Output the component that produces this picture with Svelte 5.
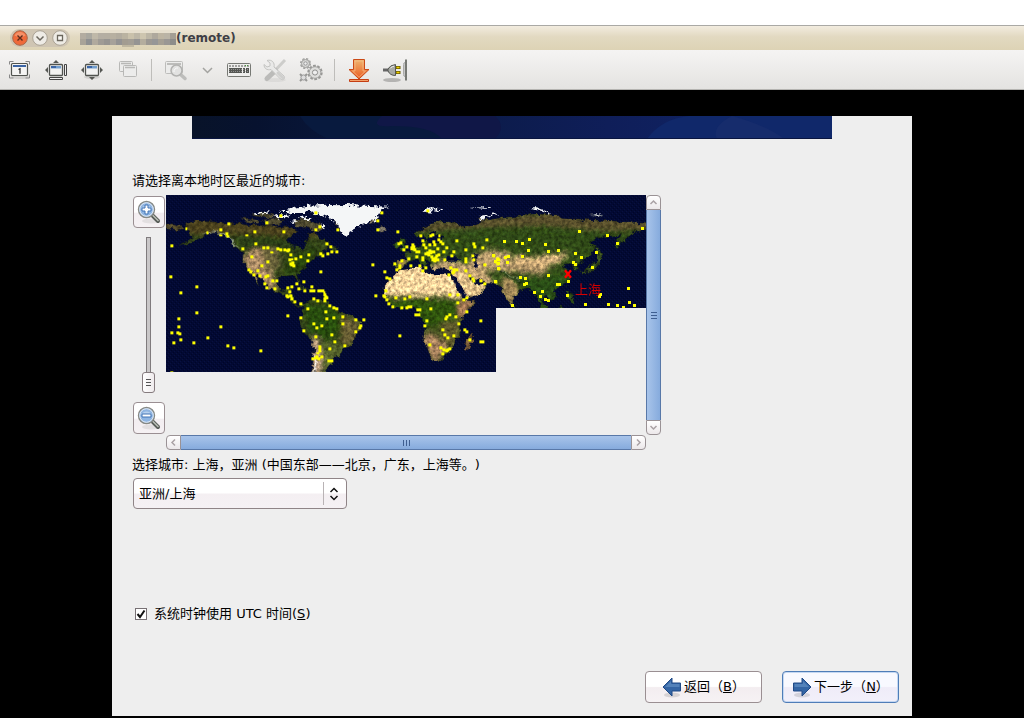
<script>
  let zoom = $state(0);
  let utc = $state(true);
  let zone = $state('亚洲/上海');

  // City markers, grouped by map sheet (Americas, Europe & Africa, Asia).
  const sheets = [
    { x: -18, y: -15, pts: '35,167 79,116 142,128 182,119 182,136 200,131 203,139 206,101 260,136 284,125 320,98 371,125 362,77 467,68 479,110 467,119 533,119 248,176 287,161 311,173 323,173 335,187 353,176 362,179 374,179 383,182 386,179 275,200 323,215 392,194 389,209 395,208 407,206 422,200 446,194 443,212 392,221 398,218 401,227 395,224 482,191 488,197 503,191 515,185 530,185 500,161 512,170 482,245 266,239 272,245 281,254 293,242 305,227 299,257 317,260 323,258 314,281 320,293 338,272 350,272 344,296 32,260 110,290 62,308 110,368 56,386 56,410 35,428 53,428 59,431 41,458 62,449 101,458 143,443 182,410 203,467 221,473 302,482 35,547 410,282 431,275 383,293 395,290 389,305 416,296 434,302 455,290 452,302 461,302 476,302 482,302 488,303 493,308 495,314 497,320 494,326 502,323 494,332 380,317 383,320 392,318 395,326 404,335 422,341 443,356 462,326 473,332 509,347 521,353 530,356 383,377 422,383 431,422 467,440 461,401 470,413 485,407 497,365 500,386 521,383 515,434 524,455 509,476 479,470 479,476 479,482 474,490 470,500 458,506 467,503 476,506 485,500 506,512 515,512' },
    { x: 492, y: -15, pts: '155,68 143,92 143,119 23,119 203,125 293,62 5,185 20,185 128,224 164,245 170,263 179,266 137,317 161,317 167,302 206,161 212,158 221,179 230,170 236,206 215,212 194,221 200,239 209,233 209,227 242,227 245,176 248,164 251,170 245,173 254,179 260,185 266,185 269,227 278,242 287,233 278,152 272,137 302,137 308,134 328,137 326,149 332,155 338,161 281,164 287,173 299,164 311,155 314,164 323,176 299,182 302,188 293,188 287,191 296,194 278,203 278,209 260,200 305,185 311,185 305,200 311,206 317,203 308,209 314,212 323,209 320,197 326,194 341,185 350,173 344,209 365,197 371,185 380,152 407,179 407,206 407,212 407,215 431,161 434,170 428,197 431,209 458,173 470,149 362,233 371,239 371,245 356,254 380,239 368,248 407,242 419,257 428,266 431,272 452,272 464,281 497,275 464,224 491,197 497,215 503,221 506,209 503,206 506,236 359,314 383,314 401,329 410,323 410,365 383,338 377,380 359,374 350,380 347,386 386,401 404,419 410,425 419,449 452,392 452,455 458,455 371,437 353,443 344,434 338,419 290,392 284,407 257,374 266,374 266,359 302,356 290,326 224,326 239,320 197,323 215,353 230,353 236,350 242,350 188,350 176,341 170,329 164,320 263,359 269,359 299,464 332,473 341,479 353,479 359,476 350,482 338,491 209,437 77,389 101,389 92,407 89,413 77,425 38,401 38,380 11,383 5,434 14,455 44,467 5,512' },
    { x: 972, y: -15, pts: '269,125 353,136 458,116 383,161 44,155 80,155 98,161 119,149 167,164 116,182 176,185 206,182 257,191 275,203 320,188 308,233 251,218 257,224 98,200 47,203 56,200 11,197 17,215 23,209 26,221 53,218 26,236 17,275 92,263 107,266 104,284 110,281 133,308 158,305 152,320 167,329 176,332 176,257 203,284 209,284 236,275 233,317 68,347 287,344 356,344 383,347 401,352 419,338 434,347 416,296 332,314 329,320' }
  ].map((s) => ({ ...s, pts: s.pts.split(' ').map((p) => p.split(',').map(Number)) }));

  // Pixelated host name in the title: one hex shade per block, two rows.
  const mosaic = [
    ['#b3aca0', '#a9a79f', '#bfb8a8', '#b4aea3', '#b4aea2', '#b7b0a1', '#b2ac9f', '#bab3a1', '#c9c1ab', '#bdb7a7', '#cdc5af', '#bcb6a6', '#aea89d', '#bdb5a3', '#bab4a6', '#a39e94'],
    ['#a9a398', '#8f9091', '#b0a99d', '#9f9b95', '#969491', '#a6a19a', '#949393', '#a29c91', '#a39e95', '#959493', '#b4ad9e', '#9c9893', '#969697', '#a59f94', '#9a9794', '#8d8c8a']
  ];
</script>

{#snippet glass(minus)}
  <svg width="26" height="26" viewBox="0 0 26 26" aria-hidden="true">
    <ellipse cx="15" cy="22" rx="9" ry="2.5" fill="#000" opacity=".07" />
    <path d="M16.5 16.5 22 22" stroke="#555a55" stroke-width="4" stroke-linecap="round" />
    <path d="M17 16.5 22 21.5" stroke="#b9bdb6" stroke-width="1.6" stroke-linecap="round" />
    <circle cx="10.5" cy="10.5" r="8" fill="#8fb5e2" stroke="#888a85" stroke-width="1.4" />
    <circle cx="10.5" cy="10.5" r="6.8" fill="none" stroke="#e4ecf5" stroke-width="1" />
    <path d="M5 10a6 6 0 0 1 11 0z" fill="#c8dcf2" opacity=".7" />
    {#if minus}
      <path d="M6 9h9v3H6z" fill="#fff" stroke="#3f73b5" />
    {:else}
      <path d="M9 6h3v3h3v3h-3v3H9v-3H6V9h3z" fill="#fff" stroke="#3f73b5" />
    {/if}
  </svg>
{/snippet}

{#snippet arrow(flip)}
  <svg class="arrow" width="20" height="22" viewBox="0 0 20 22" aria-hidden="true">
    <ellipse cx="10" cy="19" rx="8" ry="2.4" fill="#000" opacity=".12" />
    <g transform={flip ? 'matrix(-1 0 0 1 20 0)' : undefined}>
      <path d="M1 11 10 2v5h8.500v8H10v5z" fill="#3465a4" stroke="#204a87" stroke-linejoin="round" />
      <path d="M3 11 9 5v3h8.500v3z" fill="#729fcf" opacity=".5" />
    </g>
  </svg>
{/snippet}

<div class="screen">
  <header class="titlebar">
    <div class="controls">
      <button aria-label="Close"><svg width="18" height="18" viewBox="0 0 18 18">
        <circle cx="9" cy="9" r="7.300" fill="#ef6a3a" stroke="#a7694c" />
        <path d="M3.500 6.500a6 6 0 0 1 11 0q-5 3-11 0" fill="#f8a17a" opacity=".7" />
        <path d="m6.500 6.500 5 5m0-5-5 5" stroke="#5c2c1c" stroke-width="1.400" />
      </svg></button>
      <button aria-label="Minimize"><svg width="18" height="18" viewBox="0 0 18 18">
        <circle cx="9" cy="9" r="7.300" fill="#eeebe5" stroke="#aaa294" />
        <path d="m5.500 7.500 3.500 3.500 3.500-3.500" fill="none" stroke="#6b675e" stroke-width="1.500" />
      </svg></button>
      <button aria-label="Maximize"><svg width="18" height="18" viewBox="0 0 18 18">
        <circle cx="9" cy="9" r="7.300" fill="#eeebe5" stroke="#aaa294" />
        <path d="M6.500 6.500h5v5h-5z" fill="#faf8f4" stroke="#6b675e" stroke-width="1.300" />
      </svg></button>
    </div>
    <svg class="mosaic" width="96" height="18" viewBox="0 0 96 18" aria-hidden="true">
      {#each mosaic as row, r}
        {#each row as c, i}
          <rect x={i * 6} y={4 + r * 6} width="6" height="6" fill={c} />
        {/each}
      {/each}
      <path d="M0 1h96v3H0z" fill="#e6dfce" />
      <path d="M42 16h12v2H42z" fill="#aaa391" opacity=".6" />
    </svg>
    <h1>(remote)</h1>
  </header>

  <nav class="toolbar" aria-label="Viewer">
    <button class="tool" aria-label="Actual size"><svg width="28" height="28" viewBox="0 0 28 28">
      <ellipse cx="14" cy="21" rx="9" ry="2" fill="#000" opacity=".1" />
      <path d="M3.500 8.500v-3h4m12 0h4v3m0 10v3.500h-4m-12 0h-4v-3.500" fill="none" stroke="#888" />
      <rect x="5.500" y="7.500" width="16" height="12" rx="1" fill="#f4f4f3" stroke="#50534f" stroke-width="1.200" />
      <path d="M7 9h13v2H7z" fill="#3c65a5" />
      <path d="m12.500 13.500 1.500-.8v5" fill="none" stroke="#222" stroke-width="1.200" />
    </svg></button>
    <button class="tool" aria-label="Resize guest"><svg width="28" height="28" viewBox="0 0 28 28">
      <path d="m14 4 3 3h-6zM3 14l3-3v6z" fill="#555753" />
      <rect x="7.500" y="8.500" width="13" height="11" rx="1" fill="#f2f2f1" stroke="#50534f" stroke-width="1.300" />
      <path d="M9 10h10v2.500H9z" fill="#729fcf" /><path d="M9 10h5v2H9z" fill="#3c65a5" />
      <path d="M22.500 8.500h2v11h-2zM7.500 21.500h13v2h-13z" fill="#eee" stroke="#444" />
    </svg></button>
    <button class="tool" aria-label="Fit window"><svg width="28" height="28" viewBox="0 0 28 28">
      <ellipse cx="14" cy="21" rx="8" ry="2" fill="#000" opacity=".1" />
      <path d="m14 4 3 3h-6zM3 14l3-3v6zm22 0-3-3v6zM14 24l3-3h-6z" fill="#555753" />
      <rect x="7.500" y="8.500" width="13" height="11" rx="1" fill="#f2f2f1" stroke="#50534f" stroke-width="1.300" />
      <path d="M9 10h10v2.500H9z" fill="#729fcf" /><path d="M9 10h5v2H9z" fill="#3c65a5" />
    </svg></button>
    <button class="tool" aria-label="Windows" disabled><svg width="28" height="28" viewBox="0 0 28 28">
      <g fill="#ececeb" stroke="#b8b8b6"><rect x="5.500" y="5.500" width="13" height="10" rx="1" /><path d="M7 7.500h10" stroke-width="1.500" />
      <rect x="9.500" y="9.500" width="13" height="11" rx="1" /><path d="M11 11.500h10" stroke-width="1.500" /></g>
    </svg></button>
    <span class="sep"></span>
    <button class="tool" aria-label="Zoom" disabled><svg width="28" height="28" viewBox="0 0 28 28">
      <g fill="#ececeb" stroke="#bdbdbb"><rect x="3.500" y="5.500" width="17" height="12" rx="1" /><path d="M5 8h14" stroke-width="2" />
      <path d="m18 18 5 4.500" stroke-width="3.500" stroke-linecap="round" />
      <circle cx="14.500" cy="14.500" r="5.500" fill="#e2e2e1" stroke="#b2b2b0" stroke-width="1.500" /></g>
      <path d="M12 16a3.500 3.500 0 0 1 4-4" fill="none" stroke="#fafafa" />
    </svg></button>
    <button class="tool slim" aria-label="Zoom menu"><svg width="14" height="14" viewBox="0 0 14 14">
      <path d="M2 5l4.500 4.500L11 5" fill="none" stroke="#a3a3a0" stroke-width="1.500" />
    </svg></button>
    <button class="tool" aria-label="Keyboard"><svg width="28" height="28" viewBox="0 0 28 28">
      <rect x="2.500" y="7.500" width="23" height="13" rx="1" fill="#eeeeec" stroke="#777974" />
      <path d="M4 10h20" stroke="#555" stroke-dasharray="2 1" />
      <path d="M4 12h13v5H4zm14 0h2v5h-2zm3 0h3v5h-3z" fill="#555753" />
      <path d="M4 13.500h20M4 15.500h20" stroke="#aaa" stroke-dasharray="1 1" stroke-width=".7" />
      <path d="M20 9.500h4" stroke="#4a9a3a" stroke-dasharray="1 1" />
    </svg></button>
    <button class="tool" aria-label="Preferences" disabled><svg width="28" height="28" viewBox="0 0 28 28">
      <ellipse cx="14" cy="24" rx="11" ry="2" fill="#000" opacity=".05" />
      <path d="M24 4 15 13.500" stroke="#cdcdcb" stroke-width="3" /><path d="m14.500 14.500-8.500 8" stroke="#bbbbb9" stroke-width="5" stroke-linecap="round" />
      <path d="M6 4.500 9 7v3l-3 1-3-2.500c0 4 3 6 7 5l9.500 9.500c3 2 5-1 3.500-3L13 11c1-4-2-8-7-6.500z" fill="#e9e9e8" stroke="#c4c4c2" />
      <path d="m17 17 5 5" stroke="#cfcfcd" stroke-width="3" stroke-linecap="round" />
    </svg></button>
    <button class="tool" aria-label="Send keys"><svg width="28" height="28" viewBox="0 0 28 28">
      <g fill="none">
        <circle cx="8.500" cy="7.500" r="4.600" stroke="#a2a2a0" stroke-width="2" stroke-dasharray="2.100 1.510" />
        <circle cx="8.500" cy="7.500" r="4" fill="#d7d7d5" stroke="#a2a2a0" /><circle cx="8.500" cy="7.500" r="1.700" fill="#eee" stroke="#999" />
        <circle cx="18" cy="16.500" r="6.600" stroke="#979795" stroke-width="2.200" stroke-dasharray="2.700 1.447" />
        <circle cx="18" cy="16.500" r="5.800" fill="#dededc" stroke="#a2a2a0" /><circle cx="18" cy="16.500" r="2.600" fill="#eee" stroke="#8e8e8c" />
        <path d="m3 18 7 7m0-7-7 7" stroke="#979795" stroke-width="2" />
        <circle cx="6.500" cy="21.500" r="2.600" fill="#ddd" stroke="#999" />
      </g>
    </svg></button>
    <span class="sep"></span>
    <button class="tool" aria-label="Install"><svg width="28" height="28" viewBox="0 0 28 28">
      <defs><linearGradient id="down" x2="0" y2="1"><stop offset="0" stop-color="#efb56e" /><stop offset="1" stop-color="#ea5a22" /></linearGradient></defs>
      <path d="M8.500 3.500h11v10H24L14 23 4 13.500h4.500z" fill="url(#down)" stroke="#cb4a16" />
      <path d="M10 5h8v10h2.500L14 21.300 7.500 15H10z" fill="none" stroke="#f8c594" opacity=".6" />
      <path d="M4.500 23.500h19v2h-19z" fill="#f3a06a" stroke="#c43d12" />
    </svg></button>
    <button class="tool" aria-label="Disconnect"><svg width="28" height="28" viewBox="0 0 28 28">
      <ellipse cx="11" cy="24" rx="9" ry="2" fill="#000" opacity=".22" />
      <path d="M2 14h6" stroke="#666" stroke-width="3" />
      <path d="M7 13q2-4 7.500-4.500v11Q9 19.500 7 15z" fill="#a7a9a4" stroke="#555753" />
      <path d="M9.500 12q1.500-1.500 3.500-1.800" fill="none" stroke="#eee" />
      <path d="M15 11.500h4.500m-4.500 5h4.500" stroke="#665a00" stroke-width="3" /><path d="M15.500 11.500h3m-3 5h3" stroke="#f0d000" stroke-width="1.500" />
      <path d="M24 6.500q-1.500 0-1.500 2v10q0 2 1.500 2z" fill="#e4e4e2" stroke="#aaa" /><path d="M25 3.500v21" stroke="#777974" stroke-width="2" />
    </svg></button>
  </nav>

  <main>
    <form class="installer">
      <svg class="banner" viewBox="0 0 640 23" preserveAspectRatio="none" aria-hidden="true">
        <defs>
          <linearGradient id="night"><stop offset="0" stop-color="#081329" /><stop offset=".1" stop-color="#07122f" /><stop offset=".35" stop-color="#0a1a43" /><stop offset=".65" stop-color="#0f1e59" /><stop offset="1" stop-color="#10276c" /></linearGradient>
        </defs>
        <path d="M0 0h640v23H0z" fill="url(#night)" />
        <path d="M108 0q8 14 28 23H302q12-14 0-23z" fill="#081a3e" />
        <path d="M190 0q-14 12 10 10 40 0 50 13h53q12-12 0-23z" fill="#101747" />
        <path d="M455 23q14-20 42-23h143v23z" fill="#10286a" />
        <path d="M525 23q-6-12 15-23 36 10 52 23z" fill="#1a2f6e" opacity=".6" />
        <path d="M0 22.500h640" stroke="#091540" />
      </svg>

      <p class="prompt" id="map-label">请选择离本地时区最近的城市:</p>

      <div class="mapgrid">
        <div class="zoomer">
          <button type="button" class="square" aria-label="放大" onclick={() => (zoom = Math.min(10, zoom + 1))}>{@render glass(false)}</button>
          <input type="range" min="0" max="10" bind:value={zoom} aria-label="缩放" />
          <button type="button" class="square" aria-label="缩小" onclick={() => (zoom = Math.max(0, zoom - 1))}>{@render glass(true)}</button>
        </div>

        <svg class="map" viewBox="0 0 1440 720" role="img" aria-labelledby="map-label">
          <defs>
            <clipPath id="loaded"><path d="M0 0h1440v339H990v192H0z" /></clipPath>
            <pattern id="sea" width="12" height="12" patternUnits="userSpaceOnUse">
              <path d="M0 0h12v12H0z" fill="#020933" /><path d="M0 0h3v3H0zM6 6h3v3H6z" fill="#08103f" /><path d="M9 3h3v3H9zM3 9h3v3H3z" fill="#000527" />
            </pattern>
            <filter id="terrain" x="0" y="0" width="1440" height="720" filterUnits="userSpaceOnUse" color-interpolation-filters="sRGB">
              <feTurbulence type="fractalNoise" baseFrequency=".07" numOctaves="3" seed="4" result="coast" />
              <feDisplacementMap in="SourceGraphic" in2="coast" scale="18" xChannelSelector="R" yChannelSelector="G" result="land" />
              <feTurbulence type="fractalNoise" baseFrequency=".09" numOctaves="4" seed="9" />
              <feColorMatrix values="1.200 0 0 0 -.1  1.200 0 0 0 -.1  1.200 0 0 0 -.1  0 0 0 0 1" result="relief" />
              <feComposite in="land" in2="relief" operator="arithmetic" k1=".9" k2=".58" k3="0" k4="0" result="lit" />
              <feComposite in="lit" in2="land" operator="in" />
            </filter>
            <filter id="frost" x="0" y="0" width="1440" height="720" filterUnits="userSpaceOnUse" color-interpolation-filters="sRGB">
              <feTurbulence type="fractalNoise" baseFrequency=".09" numOctaves="3" seed="4" />
              <feDisplacementMap in="SourceGraphic" scale="20" xChannelSelector="R" yChannelSelector="G" />
            </filter>
            <filter id="soft" x="-20%" y="-20%" width="140%" height="140%"><feGaussianBlur stdDeviation="6" /></filter>
            <clipPath id="america"><path d="M72 102 80 93 110 91 150 92 205 97 240 98 262 104 300 100 330 104 350 110 372 104 395 112 410 122 392 132 378 148 390 158 412 163 422 178 432 174 430 156 442 142 436 128 460 122 475 140 492 146 508 160 500 172 482 180 495 186 485 194 462 200 450 212 440 218 432 230 418 240 409 250 416 264 418 277 410 272 404 256 390 254 370 256 352 260 346 276 352 290 368 298 378 290 394 290 388 304 398 318 399 332 412 342 424 340 440 328 460 322 480 328 500 334 522 350 540 362 568 372 602 392 600 408 582 430 578 460 555 468 538 490 520 505 505 524 492 546 452 546 456 510 459 480 455 450 432 430 418 400 416 385 424 370 426 350 408 347 392 334 382 320 362 308 342 302 322 292 312 280 298 258 284 250 300 284 290 278 272 246 252 225 244 208 246 190 240 178 218 166 204 146 186 134 160 126 135 132 110 146 80 160 45 168 78 152 100 138 85 128 76 114z" /></clipPath>
            <clipPath id="africa"><path d="M205 238 230 234 270 228 276 242 300 250 340 248 360 256 366 270 385 302 402 328 432 330 428 345 400 372 384 395 386 410 388 430 370 450 365 470 350 490 330 508 305 512 298 500 288 470 276 440 284 400 268 378 265 358 240 346 210 354 185 348 168 328 158 310 162 282 180 262 195 245z" /></clipPath>
            <clipPath id="eurasia"><path d="M192 206 226 206 216 184 236 182 250 172 268 165 278 148 290 150 292 160 330 152 336 134 312 134 314 116 300 120 298 140 284 146 276 132 254 138 250 128 272 114 300 98 340 92 375 94 402 108 435 100 460 88 510 80 570 75 610 68 680 72 692 82 740 84 820 88 880 92 960 98 960 112 932 120 900 128 880 148 862 170 852 168 858 148 874 132 830 136 790 144 774 156 796 168 780 190 756 208 740 217 744 238 732 238 724 222 704 219 696 228 714 246 718 266 704 280 680 290 665 298 676 316 665 330 650 322 640 312 632 325 646 345 655 358 625 356 630 340 610 305 590 290 572 297 550 320 543 348 532 334 518 305 506 286 484 274 460 274 430 262 414 252 410 260 434 278 460 280 466 290 442 312 404 324 388 298 370 266 366 250 350 237 320 232 306 238 296 214 278 198 292 220 280 230 262 206 250 208 230 215 218 228 205 236 190 226z" /></clipPath>
          </defs>
          <g clip-path="url(#loaded)">
            <path d="M0 0h1440v720H0z" fill="url(#sea)" />
            <g filter="url(#terrain)">
              <g transform="translate(-15 -12)">
                <path d="M10 98 50 102 74 111 50 117 10 110z" fill="#4a4226" />
                <g fill="#4f4a2f">
                  <path d="M238 80 268 82 300 90 288 98 250 92zM262 72 320 64 350 76 318 82zM300 88 345 80 372 90 350 102 316 102zM400 84 440 82 480 100 492 116 470 122 440 108 420 112 400 100z" />
                  <path d="M392 116 412 120 400 130zM414 274 432 288 426 290zM404 282 440 290 446 298 412 292zM452 296 474 298 468 304zM512 164 530 170 520 182 504 178z" fill="#33451c" />
                </g>
                <g clip-path="url(#america)">
                  <path d="M0 0h640v560H0z" fill="#34441a" />
                  <g filter="url(#soft)">
                    <path d="M70 85H500v50l-100 10-60-10-100-5-170 0z" fill="#49411f" />
                    <path d="m210 130 200 10 70 30-60 10-160 0z" fill="#2c3c12" />
                    <path d="m246 195 30-20 35 0 20 35 4 40 14 45-30 0-66-60z" fill="#a68762" />
                    <path d="m300 165 50 5 10 60-50 10z" fill="#665f38" />
                    <path d="m395 190 80-20-60 80-50 0z" fill="#26400f" />
                    <path d="m430 340 90 10 40 50-60 50-60-30z" fill="#274a0d" />
                    <path d="m540 370 60 25-20 60-40 10z" fill="#665c32" />
                    <path d="m450 440 22 0 10 40 0 70-35 0z" fill="#b29578" />
                    <path d="m490 450 60 20-50 70-20 0z" fill="#55622a" />
                  </g>
                  <path d="m120 130 30-8 40 6 20 18 24 22-20-6-24-26-30-6z" fill="#c9d1c9" opacity=".5" />
                  <path d="M456 490 466 510 458 546" stroke="#eee" stroke-width="4" fill="none" />
                </g>
                <path d="M395 160 405 158 402 176z" fill="#020933" opacity=".8" />
              </g>
              <g transform="translate(495 -12)">
                <path d="M8 86 28 104 30 122 20 108zM145 82 130 96 108 100 120 88z" fill="#746c5b" />
                <path d="M134 112 152 108 172 113 166 119 142 121z" fill="#756f60" />
                <path d="M440 84 446 78 460 88 450 92z" fill="#6a6045" />
                <path d="M189 164 198 152 206 158 204 168 192 172zM206 142 218 142 222 158 232 172 220 180 204 180 212 168z" fill="#304f19" />
                <g clip-path="url(#eurasia)">
                  <path d="M180 50h800v320H180z" fill="#314a18" />
                  <g filter="url(#soft)">
                    <path d="m240 90 160 0 80-10 260-20 260 30 0 30-210-2-150-15-150 5-250 15z" fill="#564d2c" />
                    <path d="m250 130 160 0 180-5 160 0 120 5-100 60-120-35-200 10-60-10-120 10z" fill="#2e4716" />
                    <path d="m330 205 80 15 20-30 50-14 60 10 0 30 80 10-30 20-130-10 40 50-120 0-20 40-100 0 0-70z" fill="#b79a6c" />
                    <path d="m360 240 60 10 50 30-30 50-50-10z" fill="#dfbd87" />
                    <path d="m555 190 40 10 50-8 70-6-30 30-50 14-70-8-30 10z" fill="#d2ae7a" />
                    <path d="m545 210 90 14 20 10-20 16-80-8-30-18z" fill="#ab8f63" />
                    <path d="m515 255 30 5 20 40-25 50-30-50z" fill="#9b8252" />
                    <path d="m570 262 150-12-10 120-90-10z" fill="#2c4d17" />
                    <path d="m190 200 40 0-20 40z" fill="#a6834f" />
                  </g>
                </g>
                <path d="m508 240 18 14 42 18 30 3" fill="none" stroke="#263e17" stroke-width="8" opacity=".8" />
                <path d="m510 236 24 18 34 14" fill="none" stroke="#e8e8e8" stroke-width="2" opacity=".5" />
                <path d="M338 208 350 196 370 194 390 206 372 212 350 212zM424 190 440 188 434 204 442 224 438 236 428 228 430 212z" fill="#020933" />
                <g clip-path="url(#africa)">
                  <path d="M150 220h300v310H150z" fill="#3f4d1d" />
                  <g filter="url(#soft)">
                    <path d="M140 220h250v70l10 34-60-10-90 0-90 0z" fill="#f2cf98" />
                    <path d="m160 330 100-6 120 6 10 60-120 20z" fill="#2f5110" />
                    <path d="m385 330 50-5-40 60-15-10z" fill="#a57855" />
                    <path d="m270 430 40 0 40 40-40 50z" fill="#a7815d" />
                    <path d="m330 390 60 0-20 90-40-30z" fill="#5d582c" />
                  </g>
                </g>
                <path d="m366 258 8-2 34 60-4 10-18-26z" fill="#020933" />
                <path d="M402 474 404 444 424 424 429 440 416 478z" fill="#6b5133" />
                <path d="M744 240 770 234 782 218 800 206 802 188 812 206 802 224 786 240 756 248zM796 164 804 168 808 190 798 186zM802 180 818 188 806 196z" fill="#354a1c" />
                <path d="M712 300 722 308 724 322 734 340 718 330 708 312zM665 356 690 344 700 356zM552 344 560 356 550 356z" fill="#2f4e1a" />
                <path d="M770 70 820 72 806 80z" fill="#98a0a0" />
              </g>
            </g>
            <g filter="url(#frost)" fill="#f4f6f7">
              <g transform="translate(-14 -12)">
                <path d="M270 68 300 64 325 61 322 65 290 72zM335 74 362 70 384 76 372 82 350 80zM352 62 400 50 440 44 500 41 530 44 470 52 450 58 430 66 400 66 385 72 380 64zM410 80 430 76 452 86 440 88zM470 98 492 104 488 112zM392 90 410 86 400 96z" />
              </g>
              <g transform="translate(496 -12)">
                <path d="M-72 58-40 48 0 43 50 42 100 44 178 47 150 54 148 66 138 80 128 88 108 94 85 104 62 118 52 135 36 130 24 112 12 92-10 78-46 70z" />
                <path d="M273 58 300 52 336 55 318 60 304 58 294 68zM410 50 486 48 470 53zM440 84 452 74 480 68 506 66 490 71 462 78 450 88zM594 52 620 52 650 62 660 68 620 60zM786 70 812 71 800 75z" />
              </g>
            </g>
            {#each sheets as sheet}
              <g transform="translate({sheet.x} {sheet.y})" fill="#ff0" shape-rendering="crispEdges">
                {#each sheet.pts as [x, y]}<rect x={x - 4} y={y - 4} width="8" height="8" />{/each}
              </g>
            {/each}
            <path d="m1197 226 18 22m0-22-18 22" stroke="#f00" stroke-width="7" />
            <text x="1227" y="297">上海</text>
          </g>
        </svg>

        <div class="bar vertical">
          <button type="button" aria-label="向上滚动"><svg width="9" height="9" viewBox="0 0 9 9"><path d="m1.500 6 3-3 3 3" /></svg></button>
          <div class="grip"><i></i></div>
          <button type="button" aria-label="向下滚动"><svg width="9" height="9" viewBox="0 0 9 9"><path d="m1.500 3 3 3 3-3" /></svg></button>
        </div>
        <div class="bar horizontal">
          <button type="button" aria-label="向左滚动"><svg width="9" height="9" viewBox="0 0 9 9"><path d="m6 1.500-3 3 3 3" /></svg></button>
          <div class="grip"><i></i></div>
          <button type="button" aria-label="向右滚动"><svg width="9" height="9" viewBox="0 0 9 9"><path d="m3 1.500 3 3-3 3" /></svg></button>
        </div>
      </div>

      <label class="chosen" for="zone">选择城市: 上海，亚洲 (中国东部——北京，广东，上海等。)</label>
      <div class="combo">
        <select id="zone" bind:value={zone}>
          <option>亚洲/上海</option>
        </select>
        <svg width="10" height="14" viewBox="0 0 10 14" aria-hidden="true"><path d="m1.500 5 3.500-3.500L8.500 5M1.500 9 5 12.500 8.500 9" /></svg>
      </div>

      <label class="utc">
        <input type="checkbox" bind:checked={utc} />
        <span>系统时钟使用 UTC 时间(<u>S</u>)</span>
      </label>

      <footer>
        <button type="button" class="step">{@render arrow(false)}<span>返回（<u>B</u>）</span></button>
        <button type="button" class="step next">{@render arrow(true)}<span>下一步（<u>N</u>）</span></button>
      </footer>
    </form>
  </main>
</div>

<style>
  :global(body) { margin: 0; background: #fff; }
  .screen {
    box-sizing: border-box;
    min-height: 100vh;
    padding-top: 25px;
    display: flex;
    flex-direction: column;
    font: 13px/18px "DejaVu Sans", "Noto Sans CJK SC", sans-serif;
    text-spacing-trim: space-all;
    color: #000;
  }
  button { font: inherit; color: inherit; margin: 0; padding: 0; }

  .titlebar {
    display: flex;
    align-items: center;
    height: 24px;
    padding-left: 10px;
    border-top: 1px solid #aaa9a5;
    background: linear-gradient(#f2ecdf, #e2d9c1 45%, #ddd3b5);
  }
  .controls {
    display: flex;
    gap: 2px;
    padding: 0 1px;
    border-radius: 10px;
    background: #cfc5b3;
  }
  .controls button { width: 18px; height: 18px; border: 0; background: none; }
  .controls svg { display: block; }
  .mosaic { margin-left: 10px; }
  h1 { margin: 0; font-size: 12px; line-height: 18px; font-weight: bold; color: #3f3f46; }

  .toolbar {
    display: flex;
    align-items: center;
    height: 39px;
    padding-left: 2px;
    border-bottom: 1px solid #b5b4b1;
    background: linear-gradient(#f5f4f3, #e4e3e1);
  }
  .tool { display: grid; place-items: center; width: 36px; height: 36px; border: 0; background: none; }
  .slim { width: 27px; }
  .sep { width: 1px; height: 22px; margin: 0 6px 0 5px; background: #bebdba; }

  main { flex: 1; padding: 26px 16px 2px; background: #000; display: flex; justify-content: center; }
  .installer {
    box-sizing: border-box;
    width: 100%;
    max-width: 800px;
    padding: 0 13px 13px 20px;
    display: flex;
    flex-direction: column;
    align-items: flex-start;
    background: #eee;
  }
  .banner { display: block; box-sizing: border-box; width: 100%; height: 23px; padding: 0 67px 0 60px; }
  .prompt { margin: 33px 0 5px; }

  .mapgrid { display: grid; grid-template-columns: 34px minmax(0, 480px) 15px; grid-template-rows: auto 15px; }
  .zoomer { display: flex; flex-direction: column; align-items: flex-start; padding: 1px; }
  .square {
    display: grid;
    place-items: center;
    box-sizing: border-box;
    width: 32px;
    height: 32px;
    border: 1px solid #9a8f92;
    border-radius: 4px;
    background: linear-gradient(#fff 50%, #f3eef1 55%, #f5f1f3);
  }
  input[type="range"] {
    appearance: none;
    writing-mode: vertical-lr;
    direction: rtl;
    flex: 1;
    width: 13px;
    height: 156px;
    min-height: 0;
    margin: 9px;
    background: linear-gradient(#7f7b7d, #7f7b7d) 4px 0 / 1px 100% no-repeat, linear-gradient(#7f7b7d, #7f7b7d) 8px 0 / 1px 100% no-repeat, linear-gradient(#7f7b7d, #7f7b7d) 4px 0 / 5px 1px no-repeat, linear-gradient(#c9c7c8, #c9c7c8) 5px 0 / 3px 100% no-repeat;
  }
  input[type="range"]::-webkit-slider-thumb {
    appearance: none;
    box-sizing: border-box;
    width: 13px;
    height: 21px;
    border: 1px solid #857b7e;
    border-radius: 3px;
    background: repeating-linear-gradient(#555 0 1px, transparent 1px 3px) 3px 6px / 5px 7px no-repeat, linear-gradient(90deg, #fff, #efebed);
  }
  .map { display: block; width: 100%; height: auto; }
  .map text { font-family: "Noto Sans CJK SC", sans-serif; font-size: 39px; fill: #d40000; }

  .bar { display: flex; }
  .vertical { flex-direction: column; }
  .horizontal { grid-column: 2; }
  .bar button {
    flex: none;
    display: grid;
    place-items: center;
    box-sizing: border-box;
    width: 15px;
    height: 15px;
    border: 1px solid #9a9295;
    background: linear-gradient(#fff, #ece8ea);
  }
  .bar path { fill: none; stroke: #aaa2a5; stroke-width: 1.5; }
  .vertical button:first-child { border-radius: 4px 4px 0 0; }
  .vertical button:last-child { border-radius: 0 0 4px 4px; }
  .horizontal button:first-child { border-radius: 4px 0 0 4px; }
  .horizontal button:last-child { border-radius: 0 4px 4px 0; }
  .grip { flex: 1; display: grid; place-items: center; border: 1px solid #5878a8; }
  .vertical .grip { border-width: 0 1px; background: linear-gradient(90deg, #a8c4ea, #86abdd); }
  .horizontal .grip { border-width: 1px 0; background: linear-gradient(#a8c4ea, #86abdd); }
  .vertical i { width: 6px; height: 7px; background: repeating-linear-gradient(#3f5f91 0 1px, transparent 1px 3px); }
  .horizontal i { width: 7px; height: 6px; background: repeating-linear-gradient(90deg, #3f5f91 0 1px, transparent 1px 3px); }

  .chosen { margin: 6px 0 4px; }
  .combo { display: grid; width: 214px; margin-left: 1px; align-items: center; }
  .combo > * { grid-area: 1 / 1; }
  .combo svg { justify-self: end; margin-right: 8px; pointer-events: none; }
  .combo path { fill: none; stroke: #111; stroke-width: 1.5; }
  select {
    appearance: none;
    box-sizing: border-box;
    width: 100%;
    height: 31px;
    padding: 0 28px 0 5px;
    border: 1px solid #8f8487;
    border-radius: 4px;
    font: inherit;
    color: #000;
    background: linear-gradient(#b9b3b5, #b9b3b5) right 22px center / 1px 23px no-repeat, linear-gradient(#fff 48%, #f4eff2 52%, #f5f1f4);
  }

  .utc { display: flex; align-items: center; gap: 7px; margin: 96px 0 0 3px; }
  .utc input {
    appearance: none;
    box-sizing: border-box;
    width: 12px;
    height: 12px;
    margin: 0;
    border: 1px solid #777074;
    background: #fff;
  }
  .utc input:checked {
    background: #fff url("data:image/svg+xml,%3Csvg xmlns='http://www.w3.org/2000/svg' viewBox='0 0 10 10'%3E%3Cpath d='M1.500 5 4 8 8.500 1.500' fill='none' stroke='%23111' stroke-width='2'/%3E%3C/svg%3E");
  }

  footer { display: flex; gap: 20px; margin: auto 0 0; align-self: flex-end; }
  .step {
    box-sizing: border-box;
    display: flex;
    align-items: center;
    justify-content: center;
    gap: 2px;
    width: 117px;
    height: 32px;
    border: 1px solid #9a8f92;
    border-radius: 4px;
    background: linear-gradient(#fff 48%, #f3edf0 52%, #f6f2f4);
  }
  .next { border-color: #4f7db8; box-shadow: inset 0 0 0 1px #c5d8f2; background: linear-gradient(#f8f9ff 48%, #efecf8 52%, #f2f0fa); }
  .arrow { flex: none; }
</style>
